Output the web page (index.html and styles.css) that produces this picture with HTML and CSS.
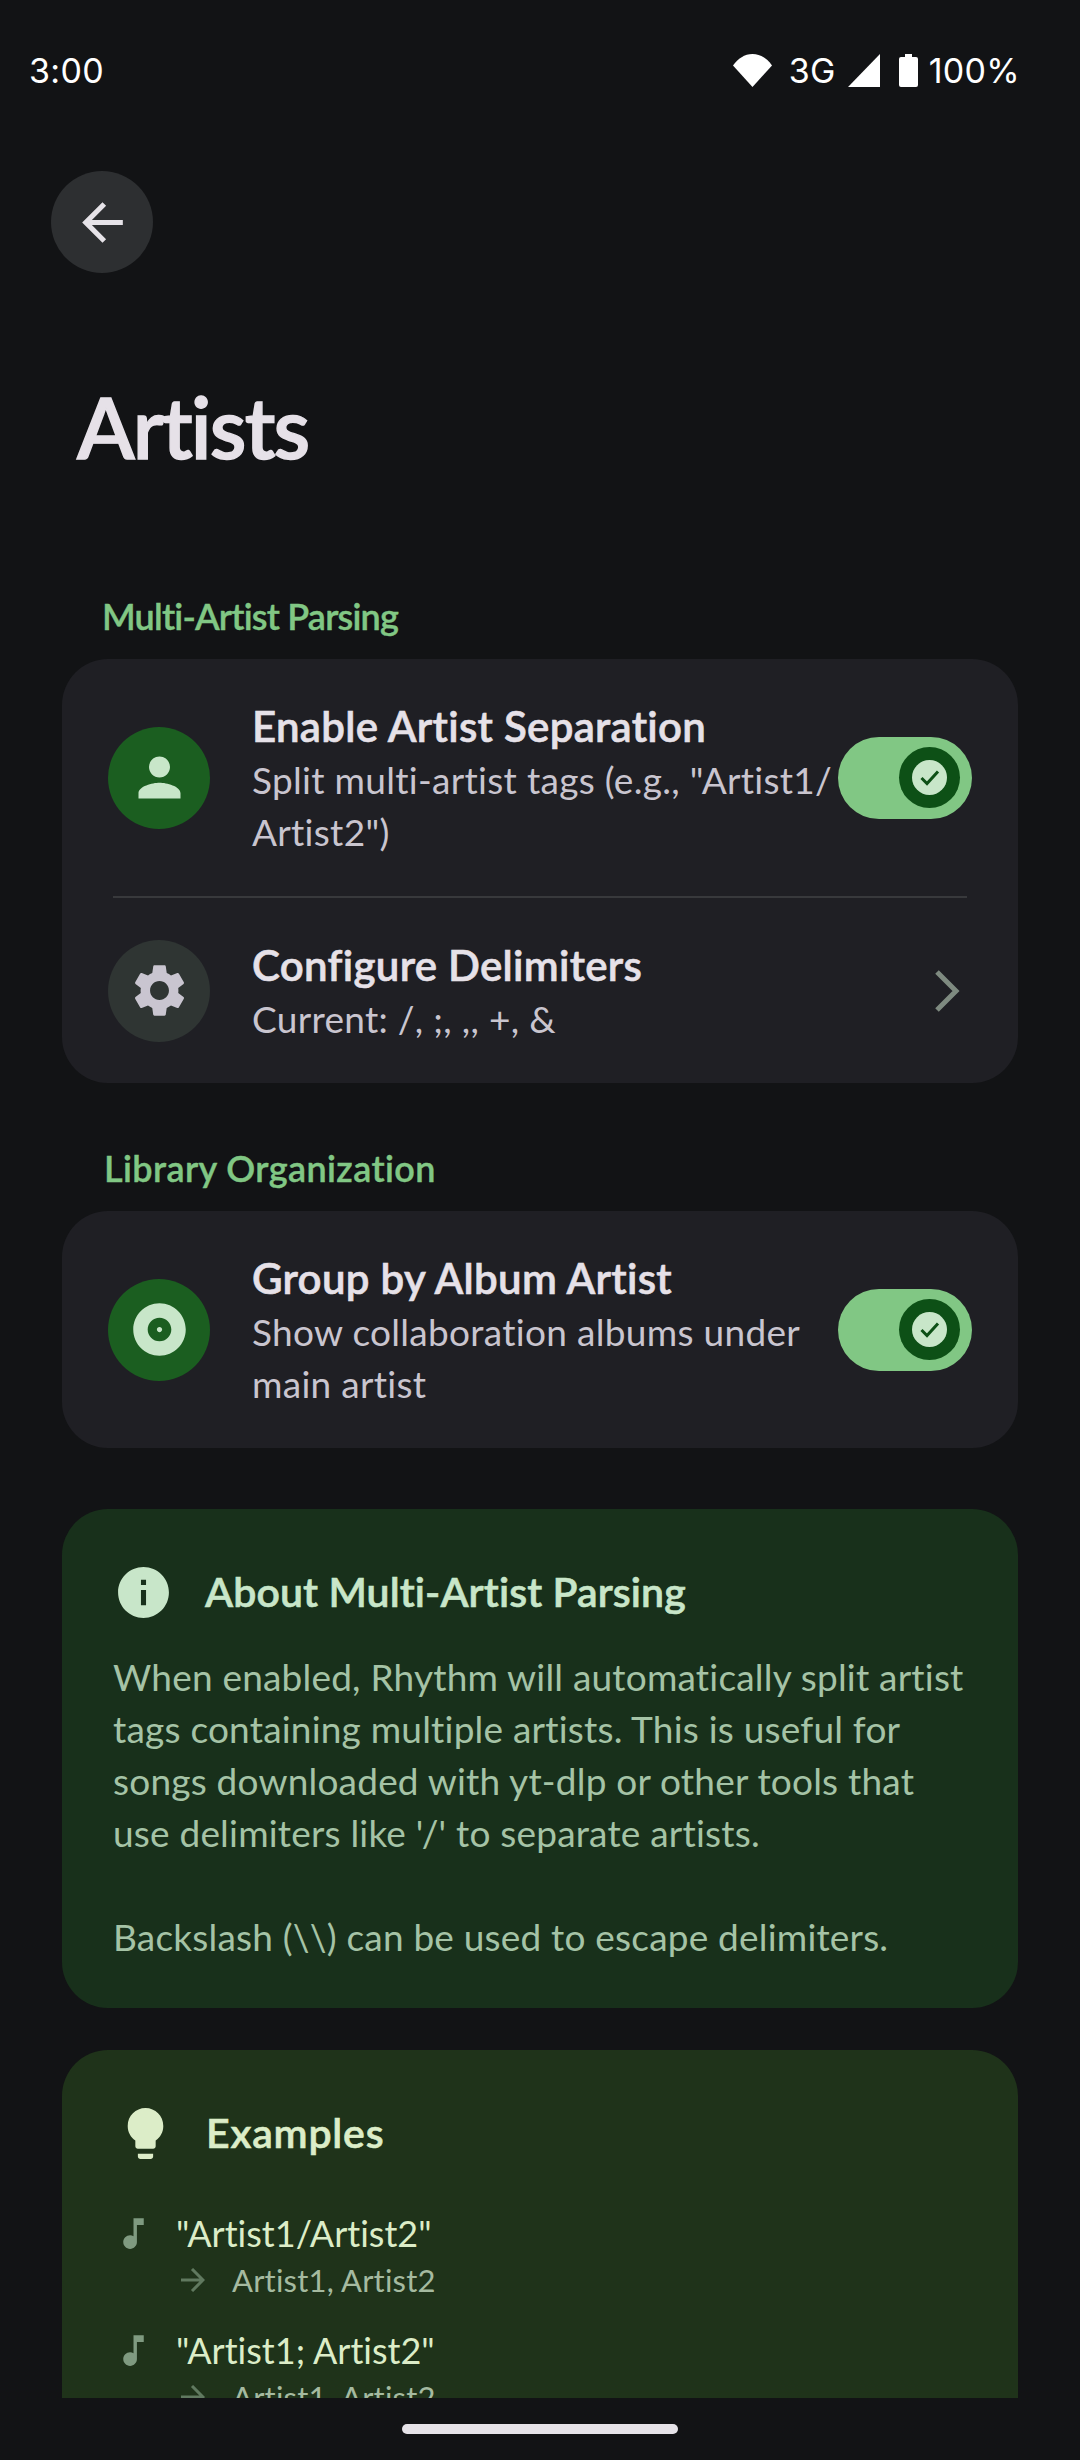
FILE: index.html
```html
<!DOCTYPE html>
<html lang="en">
<head>
    <meta charset="UTF-8">
    <meta name="viewport" content="width=device-width, initial-scale=1.0">
    <title>Artists</title>
    <link rel="stylesheet" href="styles.css">
</head>
<body>
    <div class="page">
        <div class="status-bar">
            <span class="status-time">3:00</span>
            <div class="status-right">
                <svg class="status-wifi" viewBox="0 0 39 33"><path d="M0 11.500C5 4.500 11.500 0 19.500 0S34 4.500 39 11.500L19.500 33z"/></svg>
                <span class="status-text status-net">3G</span>
                <svg class="status-signal" viewBox="0 0 32 33"><path d="M32 0v33H0z"/></svg>
                <svg class="status-battery" viewBox="0 0 19 33"><path d="M6 0h7v3h4a2 2 0 0 1 2 2v26a2 2 0 0 1-2 2H2a2 2 0 0 1-2-2V5a2 2 0 0 1 2-2h4z"/></svg>
                <span class="status-text">100%</span>
            </div>
        </div>

        <button class="back-btn">
            <svg class="icon-back" viewBox="0 0 24 24"><path d="M20 11H7.830l5.590-5.590L12 4l-8 8 8 8 1.410-1.410L7.830 13H20v-2z"/></svg>
        </button>

        <h1 class="page-title">Artists</h1>

        <div class="section-label label-first">Multi-Artist Parsing</div>
        <div class="card">
            <div class="row">
                <div class="row-icon icon-green">
                    <svg viewBox="0 0 24 24"><path d="M12 12c2.210 0 4-1.790 4-4s-1.790-4-4-4-4 1.790-4 4 1.790 4 4 4zm0 2c-2.670 0-8 1.340-8 4v2h16v-2c0-2.660-5.330-4-8-4z"/></svg>
                </div>
                <div class="row-text">
                    <div class="row-title">Enable Artist Separation</div>
                    <div class="row-sub">Split multi-artist tags (e.g., "Artist1/<br>Artist2")</div>
                </div>
                <div class="switch">
                    <div class="switch-thumb">
                        <svg viewBox="0 0 35 35"><circle cx="17.500" cy="17.500" r="17.500" fill="#c8e6c9"/><path d="M9.500 18l5.500 5.500 11-12" fill="none" stroke="#0d5016" stroke-width="3"/></svg>
                    </div>
                </div>
            </div>
            <div class="divider"></div>
            <div class="row">
                <div class="row-icon icon-grey">
                    <svg viewBox="0 0 24 24"><path d="M19.140 12.940c.04-.3.06-.61.06-.94 0-.32-.02-.64-.07-.94l2.030-1.580c.18-.14.23-.41.12-.61l-1.920-3.320c-.12-.22-.37-.29-.59-.22l-2.390.96c-.5-.38-1.030-.7-1.620-.94l-.36-2.540c-.04-.24-.24-.41-.48-.41h-3.840c-.24 0-.43.17-.47.41l-.36 2.540c-.59.24-1.130.57-1.620.94l-2.390-.96c-.22-.08-.47 0-.59.22L2.740 8.870c-.12.21-.08.47.12.61l2.030 1.580c-.05.3-.09.63-.09.94s.02.64.07.94l-2.030 1.580c-.18.14-.23.41-.12.61l1.920 3.320c.12.22.37.29.59.22l2.390-.96c.5.38 1.030.7 1.620.94l.36 2.540c.05.24.24.41.48.41h3.840c.24 0 .44-.17.47-.41l.36-2.540c.59-.24 1.130-.56 1.620-.94l2.390.96c.22.08.47 0 .59-.22l1.920-3.320c.12-.22.07-.47-.12-.61l-2.010-1.580zM12 15.600c-1.980 0-3.600-1.620-3.600-3.600s1.620-3.600 3.600-3.600 3.600 1.620 3.600 3.600-1.620 3.600-3.600 3.600z"/></svg>
                </div>
                <div class="row-text">
                    <div class="row-title">Configure Delimiters</div>
                    <div class="row-sub">Current: /, ;, ,, +, &amp;</div>
                </div>
                <svg class="chevron" viewBox="0 0 28 46"><path d="M4 4l19 19L4 42" fill="none" stroke="#7e8a80" stroke-width="5"/></svg>
            </div>
        </div>

        <div class="section-label label-second">Library Organization</div>
        <div class="card">
            <div class="row">
                <div class="row-icon icon-green">
                    <svg viewBox="0 0 24 24"><path d="M12 2C6.480 2 2 6.480 2 12s4.480 10 10 10 10-4.480 10-10S17.520 2 12 2zm0 14.500c-2.490 0-4.500-2.010-4.500-4.500S9.510 7.500 12 7.500s4.500 2.010 4.500 4.500-2.010 4.500-4.500 4.500zm0-5.500c-.55 0-1 .45-1 1s.45 1 1 1 1-.45 1-1-.45-1-1-1z"/></svg>
                </div>
                <div class="row-text">
                    <div class="row-title">Group by Album Artist</div>
                    <div class="row-sub">Show collaboration albums under<br>main artist</div>
                </div>
                <div class="switch">
                    <div class="switch-thumb">
                        <svg viewBox="0 0 35 35"><circle cx="17.500" cy="17.500" r="17.500" fill="#c8e6c9"/><path d="M9.500 18l5.500 5.500 11-12" fill="none" stroke="#0d5016" stroke-width="3"/></svg>
                    </div>
                </div>
            </div>
        </div>

        <div class="info-card about-card">
            <div class="info-head">
                <svg class="info-icon" viewBox="0 0 24 24"><path d="M12 2C6.480 2 2 6.480 2 12s4.480 10 10 10 10-4.480 10-10S17.520 2 12 2zm1 15h-2v-6h2v6zm0-8h-2V7h2v2z"/></svg>
                <h2 class="info-title">About Multi-Artist Parsing</h2>
            </div>
            <p class="about-text">When enabled, Rhythm will automatically split artist<br>tags containing multiple artists. This is useful for<br>songs downloaded with yt-dlp or other tools that<br>use delimiters like '/' to separate artists.<br><br>Backslash (\\) can be used to escape delimiters.</p>
        </div>

        <div class="info-card examples-card">
            <div class="info-head">
                <svg class="info-icon bulb" viewBox="0 0 24 24"><path d="M9 21c0 .55.45 1 1 1h4c.55 0 1-.45 1-1v-1H9v1zm3-19C8.140 2 5 5.140 5 9c0 2.380 1.190 4.470 3 5.740V17c0 .55.45 1 1 1h6c.55 0 1-.45 1-1v-2.260c1.810-1.270 3-3.360 3-5.740 0-3.860-3.140-7-7-7z"/></svg>
                <h2 class="info-title">Examples</h2>
            </div>
            <div class="example">
                <div class="example-main">
                    <svg class="note" viewBox="0 0 24 24"><path d="M12 3v10.550c-.59-.34-1.270-.55-2-.55-2.210 0-4 1.790-4 4s1.790 4 4 4 4-1.790 4-4V7h4V3h-6z"/></svg>
                    <span>"Artist1/Artist2"</span>
                </div>
                <div class="example-sub">
                    <svg class="arrow" viewBox="0 0 25 24"><path d="M1 12h22M12 1l11 11-11 11" fill="none" stroke="#60795f" stroke-width="3"/></svg>
                    <span>Artist1, Artist2</span>
                </div>
            </div>
            <div class="example">
                <div class="example-main">
                    <svg class="note" viewBox="0 0 24 24"><path d="M12 3v10.550c-.59-.34-1.270-.55-2-.55-2.210 0-4 1.790-4 4s1.790 4 4 4 4-1.790 4-4V7h4V3h-6z"/></svg>
                    <span>"Artist1; Artist2"</span>
                </div>
                <div class="example-sub">
                    <svg class="arrow" viewBox="0 0 25 24"><path d="M1 12h22M12 1l11 11-11 11" fill="none" stroke="#60795f" stroke-width="3"/></svg>
                    <span>Artist1, Artist2</span>
                </div>
            </div>
        </div>
    </div>

    <div class="nav-bar">
        <div class="nav-pill"></div>
    </div>
</body>
</html>
```

FILE: styles.css
```css
:root {
    --bg-color: #121315;
    --card-color: #1f1f24;
    --green-color: #81c784;
    --text-color: #e6e1e8;
    --sub-color: #c9c5cf;
}

* {
    margin: 0;
    padding: 0;
    box-sizing: border-box;
}

body {
    background-color: var(--bg-color);
    font-family: 'Lato', 'Noto Sans', sans-serif;
    font-variant-ligatures: none;
    color: var(--text-color);
    width: 1080px;
    height: 2460px;
    overflow: hidden;
}

.page {
    height: 2398px;
    overflow: hidden;
}

.status-bar {
    height: 140px;
    padding: 0 60px 0 29px;
    display: flex;
    align-items: center;
    justify-content: space-between;
    color: white;
    font-family: 'Inter', sans-serif;
    font-size: 34px;
    letter-spacing: 0.3px;
}

.status-right {
    display: flex;
    align-items: center;
}

.status-right svg {
    fill: white;
    height: 33px;
    display: block;
}

.status-wifi {
    width: 39px;
    margin-right: 17px;
}

.status-signal {
    width: 32px;
    margin: 0 19px 0 12px;
}

.status-battery {
    width: 19px;
    margin-right: 11px;
}

.back-btn {
    display: flex;
    align-items: center;
    justify-content: center;
    width: 102px;
    height: 102px;
    margin: 31px 0 0 51px;
    border: none;
    border-radius: 50%;
    background-color: #2d2f31;
}

.icon-back {
    width: 61px;
    height: 61px;
    fill: #e6e3e8;
}

.page-title {
    margin: 104px 0 0 77px;
    font-size: 84px;
    line-height: 100px;
    font-weight: 600;
    letter-spacing: -1.8px;
    -webkit-text-stroke: 1.4px;
}

.section-label {
    color: var(--green-color);
    font-size: 36px;
    font-weight: 600;
    line-height: 46px;
    -webkit-text-stroke: 0.4px;
}

.label-first {
    margin: 116px 0 20px 102px;
    letter-spacing: -0.8px;
}

.label-second {
    margin: 62px 0 20px 104px;
    letter-spacing: 0.4px;
}

.card {
    margin: 0 62px;
    background-color: var(--card-color);
    border-radius: 46px;
}

.row {
    display: flex;
    align-items: center;
    padding: 38px 46px;
}

.row-icon {
    flex-shrink: 0;
    width: 102px;
    height: 102px;
    border-radius: 50%;
    display: flex;
    align-items: center;
    justify-content: center;
    margin-right: 42px;
}

.row-icon svg {
    width: 63px;
    height: 63px;
}

.icon-green {
    background-color: #1b5e20;
}

.icon-green svg {
    fill: #c8e6c9;
}

.icon-grey {
    background-color: #2f3533;
}

.icon-grey svg {
    fill: #c9c5d0;
}

.row-text {
    flex: 1;
}

.row-title {
    padding-top: 2px;
    font-size: 42px;
    line-height: 55px;
    font-weight: 600;
    letter-spacing: 0.3px;
    -webkit-text-stroke: 0.6px;
    color: var(--text-color);
}

.row-sub {
    font-size: 37px;
    line-height: 52px;
    letter-spacing: 0.3px;
    color: var(--sub-color);
}

.switch {
    flex-shrink: 0;
    width: 134px;
    height: 82px;
    border-radius: 41px;
    background-color: #81c784;
    display: flex;
    align-items: center;
    justify-content: flex-end;
    padding-right: 12px;
}

.switch-thumb {
    width: 61px;
    height: 61px;
    border-radius: 50%;
    background-color: #0d5016;
    display: flex;
    align-items: center;
    justify-content: center;
}

.switch-thumb svg {
    width: 35px;
    height: 35px;
    display: block;
}

.divider {
    height: 2px;
    margin: 0 51px;
    background-color: #38393c;
}

.chevron {
    width: 28px;
    height: 46px;
    margin-right: 11px;
}

.info-card {
    margin: 0 62px;
    border-radius: 46px;
}

.about-card {
    margin-top: 61px;
    height: 499px;
    padding: 50px 51px;
    background-color: #18301b;
    color: #c8e6c9;
}

.examples-card {
    margin-top: 42px;
    padding: 50px 51px;
    height: 500px;
    background-color: #1f331a;
    color: #dcedc8;
}

.info-head {
    display: flex;
    align-items: center;
    height: 66px;
}

.info-icon {
    width: 61px;
    height: 61px;
    fill: currentColor;
    margin-right: 31px;
}

.bulb {
    margin-left: 2px;
    margin-right: 30px;
}

.info-title {
    font-size: 41px;
    font-weight: 600;
    line-height: 56px;
    letter-spacing: 0.1px;
    -webkit-text-stroke: 0.6px;
}

.examples-card .info-title {
    letter-spacing: 0.8px;
}

.about-text {
    margin-top: 26px;
    font-size: 37px;
    line-height: 52px;
    letter-spacing: 0.2px;
    color: #a5c3a6;
}

.example {
    margin-top: 42px;
}

.example + .example {
    margin-top: 23px;
}

.example-main {
    display: flex;
    align-items: center;
    font-size: 36px;
    line-height: 50px;
}

.note {
    width: 41px;
    height: 41px;
    fill: #7f9a80;
    margin-right: 22px;
}

.example-sub {
    display: flex;
    align-items: center;
    margin-left: 67px;
    font-size: 31px;
    line-height: 44px;
    letter-spacing: 0.2px;
    color: #a5baa0;
}

.arrow {
    width: 25px;
    height: 24px;
    margin-right: 27px;
}

.nav-bar {
    height: 62px;
    display: flex;
    align-items: center;
    justify-content: center;
}

.nav-pill {
    width: 276px;
    height: 10px;
    border-radius: 5px;
    background-color: #e6e3e8;
}
```
